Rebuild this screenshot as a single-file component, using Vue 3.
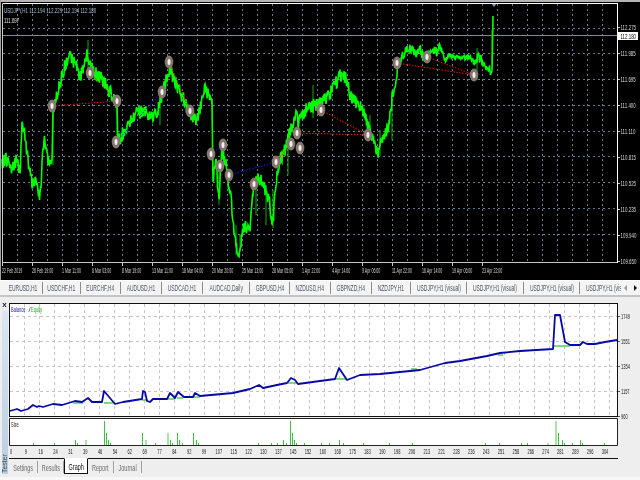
<script setup>
function rng(seed) {
  let s = seed
  return () => {
    s = (s * 1664525 + 1013904223) % 4294967296
    return s / 4294967296
  }
}
const pricePts = [[2,163],[8,158],[12,170],[16,160],[20,172],[22,124],[25,135],[28,160],[32,185],[36,178],[40,197],[44,137],[48,160],[52,165],[53,110],[58,92],[62,74],[68,57],[75,62],[80,78],[87,56],[93,72],[100,77],[107,87],[113,97],[117,104],[118,142],[122,135],[128,125],[137,112],[145,112],[150,118],[157,112],[160,102],[165,84],[170,70],[175,82],[180,92],[190,112],[197,122],[200,108],[205,88],[210,98],[212,102],[213,180],[216,165],[219,198],[222,152],[226,162],[232,208],[236,248],[240,251],[243,228],[248,226],[250,232],[253,192],[258,176],[262,182],[266,192],[270,206],[273,225],[275,190],[280,160],[285,150],[290,132],[296,112],[298,124],[304,112],[310,106],[320,104],[325,100],[330,95],[335,85],[340,74],[347,80],[350,95],[355,100],[362,110],[365,118],[372,135],[378,153],[384,136],[388,128],[392,100],[395,82],[398,64],[403,55],[410,47],[415,55],[420,50],[425,60],[430,50],[436,52],[440,47],[445,60],[450,55],[455,58],[463,58],[470,57],[475,64],[478,55],[482,62],[488,68],[492,72],[493,16]]

function jitter(pts, amp, seed) {
  const r = rng(seed)
  const out = []
  for (let i = 0; i < pts.length - 1; i++) {
    const [x0, y0] = pts[i]
    const [x1, y1] = pts[i + 1]
    const steps = Math.max(1, Math.round((x1 - x0) * 2))
    for (let k = 0; k < steps; k++) {
      const t = k / steps
      const flat = x0 > 440 && x0 < 475 ? 0.35 : x0 > 398 ? 0.7 : 1
      out.push([(x0 + (x1 - x0) * t).toFixed(1), (y0 + (y1 - y0) * t + (r() - 0.5) * amp * flat).toFixed(1)])
    }
  }
  out.push(pts[pts.length - 1])
  return out.map(p => p.join(',')).join(' ')
}
const priceLine = jitter(pricePts, 14, 7)
const wicks = [[53,105,165],[117,100,135],[212.5,100,182],[88,40,75],[160,90,125],[219,160,205],[236,225,255],[240,235,252],[256,180,215],[266,185,225],[273,190,228],[288,135,175],[313,85,118],[370,115,135],[380,130,156],[392,100,140],[477,48,80],[492,30,65]]

const hLines = [28, 53, 79, 105, 131, 156, 182, 208, 234]
const vLines = Array.from({ length: 40 }, (_, k) => 17 + 15 * k)
const prices = [['112.275',27],['111.985',53],['111.695',79],['111.400',105],['111.110',131],['110.815',157],['110.525',183],['110.235',209],['109.940',235],['109.650',261]]
const dates = ['22 Feb 2019','26 Feb 19:00','1 Mar 11:00','6 Mar 03:00','8 Mar 19:00','13 Mar 11:00','18 Mar 04:00','20 Mar 20:00','25 Mar 13:00','28 Mar 05:00','1 Apr 22:00','4 Apr 14:00','9 Apr 06:00','11 Apr 22:00','16 Apr 14:00','19 Apr 06:00','23 Apr 22:00']
const marks = [[52,106],[90,73],[117,101],[116,142],[169,62],[162,92],[190,111],[211,154],[223,145],[220,166],[229,175],[254,184],[276,162],[291,144],[297,133],[300,148],[321,110],[368,135],[397,63],[427,57],[474,75]]
const redLinks = [[52,106,117,101],[90,73,117,101],[169,62,190,111],[297,133,368,135],[321,110,368,135],[276,162,291,144],[291,144,300,148],[397,63,474,75],[427,57,474,75]]
const blueLinks = [[116,142,162,92],[211,154,223,145],[229,175,276,162]]

const topTabs = [['EURUSD,H1',40],['USDCHF,H1',38],['EURCHF,H4',40],['AUDUSD,H1',41],['USDCAD,H1',41],['AUDCAD,Daily',47],['GBPUSD,H4',40],['NZDUSD,H4',41],['GBPNZD,H4',41],['NZDJPY,H1',39],['USDJPY,H1 (visual)',56],['USDJPY,H1 (visual)',57],['USDJPY,H1 (visual)',56],['USDJPY,H1 (visual)',56]]
const testerTabs = [['Settings',29],['Results',26],['Graph',24],['Report',26],['Journal',28]]

const balance = [[10,411],[17,409],[21,411],[28,409],[33,405],[37,407],[39,406],[43,407],[53,404],[62,405],[75,401],[82,402],[88,398],[92,402],[102,402],[104,391],[115,404],[123,402],[142,399],[143,391],[145,392],[147,401],[150,402],[153,399],[167,399],[170,393],[175,398],[178,392],[184,397],[193,397],[195,393],[200,396],[233,393],[250,389],[259,385],[263,388],[277,385],[287,383],[291,378],[295,380],[298,384],[320,381],[335,379],[339,368],[347,380],[360,375],[380,374],[400,372],[420,370],[445,363],[460,361],[487,356],[500,353],[520,351],[553,349],[555,315],[560,315],[565,342],[570,345],[580,345],[583,342],[587,344],[595,344],[605,342],[617,340]].map(p => p.join(',')).join(' ')
const equity = [[73,403,83,403],[104,403,113,403],[142,400,148,400],[167,399,175,399],[177,398,183,398],[192,397,200,397],[288,383,297,383],[335,379,347,379],[411,369,417,369],[498,355,503,355],[553,346,570,346]]
const graphV = Array.from({ length: 40 }, (_, k) => 24 + 15 * k)
const graphH = [316, 341, 366, 391]
const yAxis = [['1749',316],['1551',341],['1354',366],['1157',391],['960',416]]
const bars = [[33,2],[54,2],[75,5],[77,2],[104,24],[106,12],[108,5],[110,2],[142,12],[155,2],[170,5],[172,2],[177,12],[179,5],[182,2],[193,12],[196,5],[198,2],[258,2],[271,2],[277,2],[283,5],[286,2],[290,24],[292,12],[294,5],[296,2],[304,2],[321,2],[329,2],[339,5],[343,2],[363,2],[389,2],[412,2],[485,2],[499,2],[521,2],[527,2],[558,12],[562,5],[564,2],[572,2],[580,5],[582,2],[604,2]]
const paleBars = [[85,5],[145,5],[167,12],[547,2],[555,24]]
const xLabels = [0,9,16,24,31,39,46,54,62,69,77,84,92,99,107,115,122,130,137,145,152,160,168,175,183,190,198,206,213,221,228,236,243,251,258,266,274,281,289,296,304]
</script>

<template>
  <div class="screen">
    <svg class="chart" width="640" height="280" viewBox="0 0 640 280">
      <rect width="640" height="280" fill="#000" />
      <rect x="0" y="0" width="640" height="2" fill="#b4b4b4" />
      <rect x="0" y="0" width="1" height="280" fill="#a0a0a0" />
      <g class="grid">
        <line v-for="y in hLines" :key="'h' + y" x1="3" x2="617" :y1="y + .5" :y2="y + .5" />
        <line v-for="x in vLines" :key="'v' + x" y1="4" y2="262" :x1="x + .5" :x2="x + .5" />
      </g>
      <line x1="3" x2="617" y1="35.5" y2="35.5" stroke="#7d8c98" />
      <polygon points="491,3 497,3 494,7" fill="#7f98ad" />
      <line v-for="(w, i) in wicks" :key="'w' + i" :x1="w[0]" :x2="w[0]" :y1="w[1]" :y2="w[2]" stroke="#00b000" />
      <polyline :points="priceLine" fill="none" stroke="#00ff00" stroke-width="1.600" />
      <g class="red">
        <line v-for="(l, i) in redLinks" :key="'r' + i" :x1="l[0]" :y1="l[1]" :x2="l[2]" :y2="l[3]" />
      </g>
      <g class="blue">
        <line v-for="(l, i) in blueLinks" :key="'b' + i" :x1="l[0]" :y1="l[1]" :x2="l[2]" :y2="l[3]" />
      </g>
      <g v-for="(m, i) in marks" :key="'m' + i">
        <ellipse :cx="m[0]" :cy="m[1]" rx="4.300" ry="6.500" fill="#84786e" />
        <ellipse :cx="m[0]" :cy="m[1]" rx="1.500" ry="3" fill="#f6eef2" />
      </g>
      <path d="M2.500 263V3.500H617.500V262.500H2.500" fill="none" stroke="#c8c8c8" />
      <line x1="3" x2="618" y1="3.500" y2="3.500" stroke="#fff" />
      <line x1="617.500" x2="617.500" y1="3" y2="263" stroke="#fff" />
      <text class="ct" transform="translate(4 13) scale(.56 1)" fill="#a8bfd6">USDJPY,H1 112.194 112.229 112.194 112.180</text>
      <text class="ct" transform="translate(4 23) scale(.55 1)" fill="#e0e0e0">111.697</text>
      <g v-for="p in prices" :key="p[0]">
        <line x1="618" x2="620" :y1="p[1] + .5" :y2="p[1] + .5" stroke="#ccc" />
        <text class="ct" :transform="`translate(620.500 ${p[1] + 3}) scale(.55 1)`" fill="#d8d8d8">{{ p[0] }}</text>
      </g>
      <rect x="618" y="32" width="20" height="8" fill="#fff" />
      <text class="ct" transform="translate(620.500 39) scale(.55 1)" fill="#000">112.180</text>
      <g v-for="(d, i) in dates" :key="d">
        <line :x1="2.500 + 30 * i" :x2="2.500 + 30 * i" y1="263" y2="266" stroke="#ccc" />
        <text class="ct" :transform="`translate(${2 + 30 * i} 273) scale(.45 1)`" fill="#d8d8d8">{{ d }}</text>
      </g>
    </svg>

    <div class="strip">
      <div v-for="(t, i) in topTabs" :key="i" class="stab" :style="{ width: t[1] + 'px' }">
        <span class="stext">{{ t[0] }}</span>
      </div>
      <div class="arrows">
        <span class="arr off"></span>
        <span class="arr on"></span>
      </div>
    </div>

    <div class="tester">
      <div class="side">
        <span class="close">x</span>
        <div class="rail"><span class="vert">Tester</span></div>
      </div>
      <div class="body">
        <svg class="graph" width="631" height="161" viewBox="9 297 631 161">
          <rect x="9.500" y="303.500" width="608" height="113" fill="#fff" />
          <rect x="9.500" y="418.500" width="608" height="27" fill="#fff" />
          <g class="ggrid">
            <line v-for="x in graphV" :key="'gv' + x" :x1="x + .5" :x2="x + .5" y1="304" y2="416" />
            <line v-for="y in graphH" :key="'gh' + y" x1="10" x2="617" :y1="y + .5" :y2="y + .5" />
          </g>
          <line v-for="(e, i) in equity" :key="'e' + i" :x1="e[0]" :x2="e[2]" :y1="e[1]" :y2="e[3]" stroke="#55cc55" stroke-width="1.500" />
          <polyline :points="balance" fill="none" stroke="#0808a8" stroke-width="1.800" stroke-linejoin="round" />
          <rect x="9.500" y="303.500" width="608" height="113" fill="none" stroke="#111" />
          <path d="M9.500 445.500V418.500H617.500V445.500Z" fill="none" stroke="#222" />
          <rect v-for="(b, i) in bars" :key="'bar' + i" :x="b[0]" :y="445 - b[1]" width="1" :height="b[1]" fill="#40c040" />
          <rect v-for="(b, i) in paleBars" :key="'pb' + i" :x="b[0]" :y="445 - b[1]" width="2" :height="b[1]" fill="#a8e4a8" />
          <text class="gt" transform="translate(11 312) scale(.5 1)" fill="#1a1ab0">Balance</text>
          <text class="gt" transform="translate(28.500 312)" fill="#444">/</text>
          <text class="gt" transform="translate(31 312) scale(.5 1)" fill="#22aa22">Equity</text>
          <text class="gt" transform="translate(11 427) scale(.5 1)" fill="#222">Size</text>
          <text v-for="(l, i) in xLabels" :key="'xl' + i" class="gt" text-anchor="middle" :transform="`translate(${11 + 14.85 * i} 454) scale(.5 1)`" fill="#222">{{ l }}</text>
          <g v-for="a in yAxis" :key="a[0]">
            <line x1="618" x2="620" :y1="a[1] + .5" :y2="a[1] + .5" stroke="#555" />
            <text class="gt" :transform="`translate(621 ${a[1] + 3}) scale(.5 1)`" fill="#222">{{ a[0] }}</text>
          </g>
        </svg>
        <div class="btabs">
          <div v-for="t in testerTabs" :key="t[0]" class="btab" :class="{ active: t[0] === 'Graph' }" :style="{ width: t[1] + 'px' }">
            <span class="btext">{{ t[0] }}</span>
          </div>
        </div>
      </div>
    </div>
  </div>
</template>

<style scoped>
.screen {
  width: 640px;
  height: 480px;
  overflow: hidden;
  display: flex;
  flex-direction: column;
  background: #eeeeee;
  font-family: "Liberation Sans", Arial, sans-serif;
  filter: blur(.35px);
}
.chart {
  display: block;
  flex: none;
}
.grid line {
  stroke: #6c7e8e;
  stroke-dasharray: 2 3;
}
.ggrid line {
  stroke: #c4c4c4;
  stroke-dasharray: 3 3;
}
.red line {
  stroke: #f01010;
  stroke-dasharray: 1.500 1.500;
}
.blue line {
  stroke: #1a1af0;
  stroke-dasharray: 1.500 1.500;
}
.ct,
.gt {
  font-size: 8px;
  font-family: "Liberation Sans", Arial, sans-serif;
}
.strip {
  flex: none;
  height: 17px;
  box-sizing: border-box;
  display: flex;
  align-items: center;
  padding-left: 3px;
  background: #f4f4f4;
  border-top: 1px solid #fff;
  border-bottom: 2px solid #c4c4c4;
  overflow: hidden;
  position: relative;
}
.stab {
  flex: none;
  height: 12px;
  box-sizing: border-box;
  display: flex;
  align-items: center;
  justify-content: center;
  border-right: 1px solid #8c8c8c;
  overflow: hidden;
}
.stext {
  font-size: 9px;
  color: #4c5566;
  white-space: nowrap;
  transform: scaleX(.55);
}
.arrows {
  position: absolute;
  right: 0;
  top: 0;
  bottom: 0;
  width: 19px;
  background: #f4f4f4;
  display: flex;
  align-items: center;
  justify-content: space-between;
  padding: 0 3px;
  box-sizing: border-box;
}
.arr {
  width: 0;
  height: 0;
  border-top: 3px solid transparent;
  border-bottom: 3px solid transparent;
}
.arr.off {
  border-right: 3px solid #999;
}
.arr.on {
  border-left: 3px solid #111;
}
.tester {
  flex: 1;
  display: flex;
  min-height: 0;
  border-bottom: 3px solid #f8f8f8;
}
.side {
  flex: none;
  width: 9px;
  display: flex;
  flex-direction: column;
  align-items: center;
  padding-top: 2px;
  padding-bottom: 3px;
  box-sizing: border-box;
}
.close {
  height: 12px;
  line-height: 12px;
  font-size: 8px;
  font-weight: bold;
  color: #222;
}
.rail {
  flex: 1;
  width: 6px;
  background: linear-gradient(#dbe6f1, #b9cde0);
  display: flex;
  align-items: flex-end;
  justify-content: center;
  overflow: hidden;
}
.vert {
  writing-mode: vertical-rl;
  transform: rotate(180deg);
  font-size: 7px;
  line-height: 6px;
  color: #3c4a5a;
  margin-bottom: 1px;
}
.body {
  flex: 1;
  min-width: 0;
  display: flex;
  flex-direction: column;
}
.graph {
  display: block;
  flex: none;
}
.btabs {
  flex: none;
  height: 16px;
  display: flex;
  border-top: 1px solid #111;
  margin-right: 22px;
}
.btab {
  height: 12px;
  margin-top: 2px;
  box-sizing: border-box;
  flex: none;
  display: flex;
  align-items: center;
  justify-content: center;
  border-right: 1px solid #a0a0a0;
}
.btext {
  font-size: 9.500px;
  color: #6a6a6a;
  transform: scaleX(.58);
}
.btab.active {
  margin-top: -1px;
  height: 16px;
  background: #fff;
  border: 1px solid #111;
  border-top: 1px solid #fff;
}
.btab.active .btext {
  color: #111;
}
</style>
